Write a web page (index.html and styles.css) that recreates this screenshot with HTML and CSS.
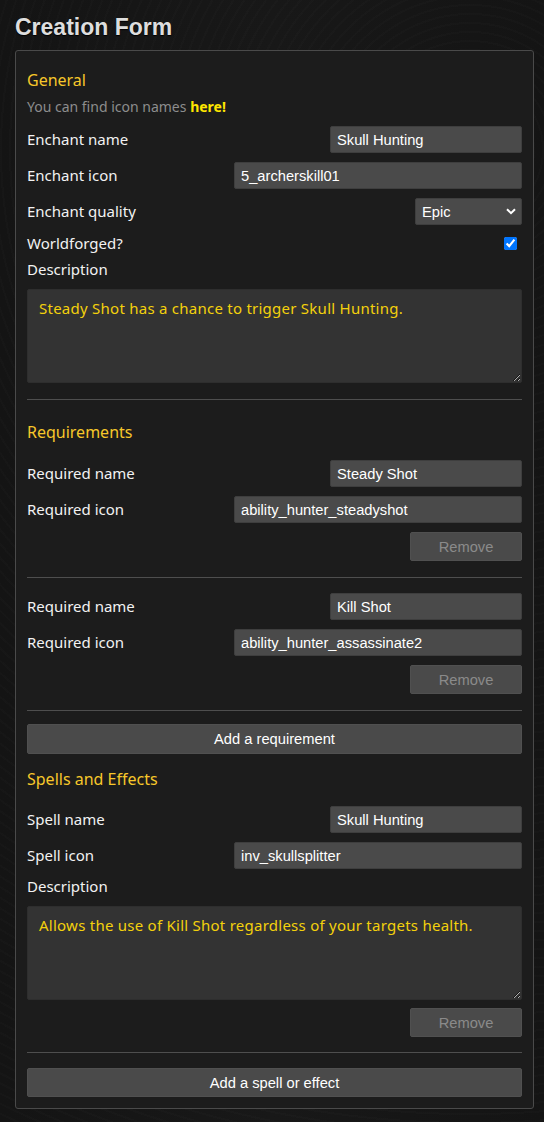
FILE: index.html
```html
<!DOCTYPE html>
<html lang="en">
<head>
<meta charset="utf-8">
<title>Creation Form</title>
<link rel="stylesheet" href="styles.css">
</head>
<body>
<div class="page">
  <h1 class="title">Creation Form</h1>
  <form class="panel">
    <h2 class="heading heading-first">General</h2>
    <p class="hint">You can find icon names <a class="hint-link">here!</a></p>
    <div class="row row-after-hint"><label class="label">Enchant name</label><input class="field field-name" value="Skull Hunting"></div>
    <div class="row"><label class="label">Enchant icon</label><input class="field field-icon" value="5_archerskill01"></div>
    <div class="row"><label class="label">Enchant quality</label>
      <div class="select-wrap">
        <select class="field select"><option>Epic</option></select>
        <svg class="chevron" width="10" height="7" viewBox="0 0 10 7"><polyline points="1,1.2 5,5.2 9,1.2" fill="none" stroke="#fff" stroke-width="2"/></svg>
      </div>
    </div>
    <div class="row row-check"><label class="label">Worldforged?</label><input type="checkbox" class="check" checked></div>
    <label class="label label-block">Description</label>
    <textarea class="area">Steady Shot has a chance to trigger Skull Hunting.</textarea>

    <hr class="divider">

    <h2 class="heading heading-req">Requirements</h2>
    <div class="row row-after-heading"><label class="label">Required name</label><input class="field field-name" value="Steady Shot"></div>
    <div class="row"><label class="label">Required icon</label><input class="field field-icon" value="ability_hunter_steadyshot"></div>
    <button type="button" class="btn btn-remove" disabled>Remove</button>

    <hr class="divider">

    <div class="row row-after-divider"><label class="label">Required name</label><input class="field field-name" value="Kill Shot"></div>
    <div class="row"><label class="label">Required icon</label><input class="field field-icon" value="ability_hunter_assassinate2"></div>
    <button type="button" class="btn btn-remove" disabled>Remove</button>

    <hr class="divider">

    <button type="button" class="btn btn-add btn-add-req">Add a requirement</button>

    <h2 class="heading heading-spell">Spells and Effects</h2>
    <div class="row row-after-heading-s"><label class="label">Spell name</label><input class="field field-name" value="Skull Hunting"></div>
    <div class="row"><label class="label">Spell icon</label><input class="field field-icon" value="inv_skullsplitter"></div>
    <label class="label label-block label-block-s">Description</label>
    <textarea class="area">Allows the use of Kill Shot regardless of your targets health.</textarea>
    <button type="button" class="btn btn-remove btn-remove-s" disabled>Remove</button>

    <hr class="divider divider-s">

    <button type="button" class="btn btn-add btn-add-spell">Add a spell or effect</button>
  </form>
</div>
</body>
</html>
```

FILE: styles.css
```css
* { box-sizing: border-box; }

html, body {
  margin: 0;
  padding: 0;
}

body {
  background-color: #151515;
  background-image:
    repeating-radial-gradient(circle at 470px 150px, rgba(255,255,255,0.01) 0 2px, rgba(0,0,0,0) 2px 9px),
    linear-gradient(90deg, #141414, #181818 50%, #141414);
  min-height: 1122px;
}

.page {
  padding: 13px 10px 14px 15px;
}

.title {
  margin: 0 0 9px;
  font: bold 23px/28px "Liberation Sans", Arial, sans-serif;
  color: #dedede;
  text-shadow: 0 1px 1px #000;
}

.panel {
  display: flex;
  flex-direction: column;
  background: #1c1c1c;
  border: 1px solid #4a4a4a;
  border-radius: 3px;
  padding: 18px 11px 11px;
}

.heading {
  margin: 0;
  font: 16px/22px "Noto Sans", "DejaVu Sans", sans-serif;
  font-weight: normal;
  color: #f7c72a;
}

.heading-req { margin-top: 21px; }
.heading-spell { margin-top: 14px; }

.hint {
  margin: 6px 0 0;
  font: 14px/20px "Noto Sans", "DejaVu Sans", sans-serif;
  color: #8d8d8d;
}

.hint-link {
  color: #ffe600;
  font-weight: bold;
  cursor: pointer;
}

.row {
  display: flex;
  align-items: center;
  justify-content: space-between;
  margin-top: 9px;
}

.row-after-hint { margin-top: 9px; }
.row-after-heading { margin-top: 17px; }
.row-after-heading-s { margin-top: 16px; }
.row-after-divider { margin-top: 15px; }

.label {
  font: 15px/20px "Noto Sans", "DejaVu Sans", sans-serif;
  color: #f2f2f2;
}

.row .label { padding-bottom: 2px; }

.row-check .label { line-height: 19px; padding-bottom: 0; }

.label-block {
  display: block;
  margin-top: 6px;
}

.label-block-s { margin-top: 7px; }

.field {
  height: 27px;
  margin: 0;
  padding: 0 6px;
  font: 14.7px "Liberation Sans", Arial, sans-serif;
  color: #ffffff;
  background: #4a4a4a;
  border: 1px solid #3e3e3e;
  border-radius: 2px;
  outline: none;
}

.field-name { width: 192px; }
.field-icon { width: 288px; }

.select-wrap {
  position: relative;
  width: 107px;
  height: 27px;
}

.select {
  appearance: none;
  -webkit-appearance: none;
  width: 107px;
  padding-left: 6px;
}

.chevron {
  position: absolute;
  right: 6px;
  top: 10px;
  pointer-events: none;
}

.check {
  width: 13px;
  height: 13px;
  margin: 3px 5px 3px 4px;
  accent-color: #0075ff;
}

.area {
  display: block;
  width: 100%;
  height: 94px;
  margin: 10px 0 0;
  padding: 8px 11px;
  font: 15px/20px "Noto Sans", "DejaVu Sans", sans-serif;
  letter-spacing: 0.25px;
  color: #f3d10c;
  background: #333333;
  border: 1px solid #2e2e2e;
  border-radius: 2px;
  outline: none;
  resize: vertical;
}

.divider {
  margin: 16px 0 0;
  height: 1px;
  border: 0;
  background: #4e4e4e;
}

.divider-s { margin-top: 15px; }

.btn {
  margin: 9px 0 0;
  padding: 0;
  font: 14.7px "Liberation Sans", Arial, sans-serif;
  color: #ffffff;
  background: #4a4a4a;
  border: 1px solid #505050;
  border-radius: 2px;
}

.btn-remove {
  align-self: flex-end;
  width: 112px;
  height: 29px;
  color: #8a8a8a;
}

.btn-remove-s { margin-top: 8px; }

.btn-add {
  width: 100%;
  height: 30px;
}

.btn-add-req { margin-top: 13px; }
.btn-add-spell { margin-top: 15px; height: 29px; }
```
